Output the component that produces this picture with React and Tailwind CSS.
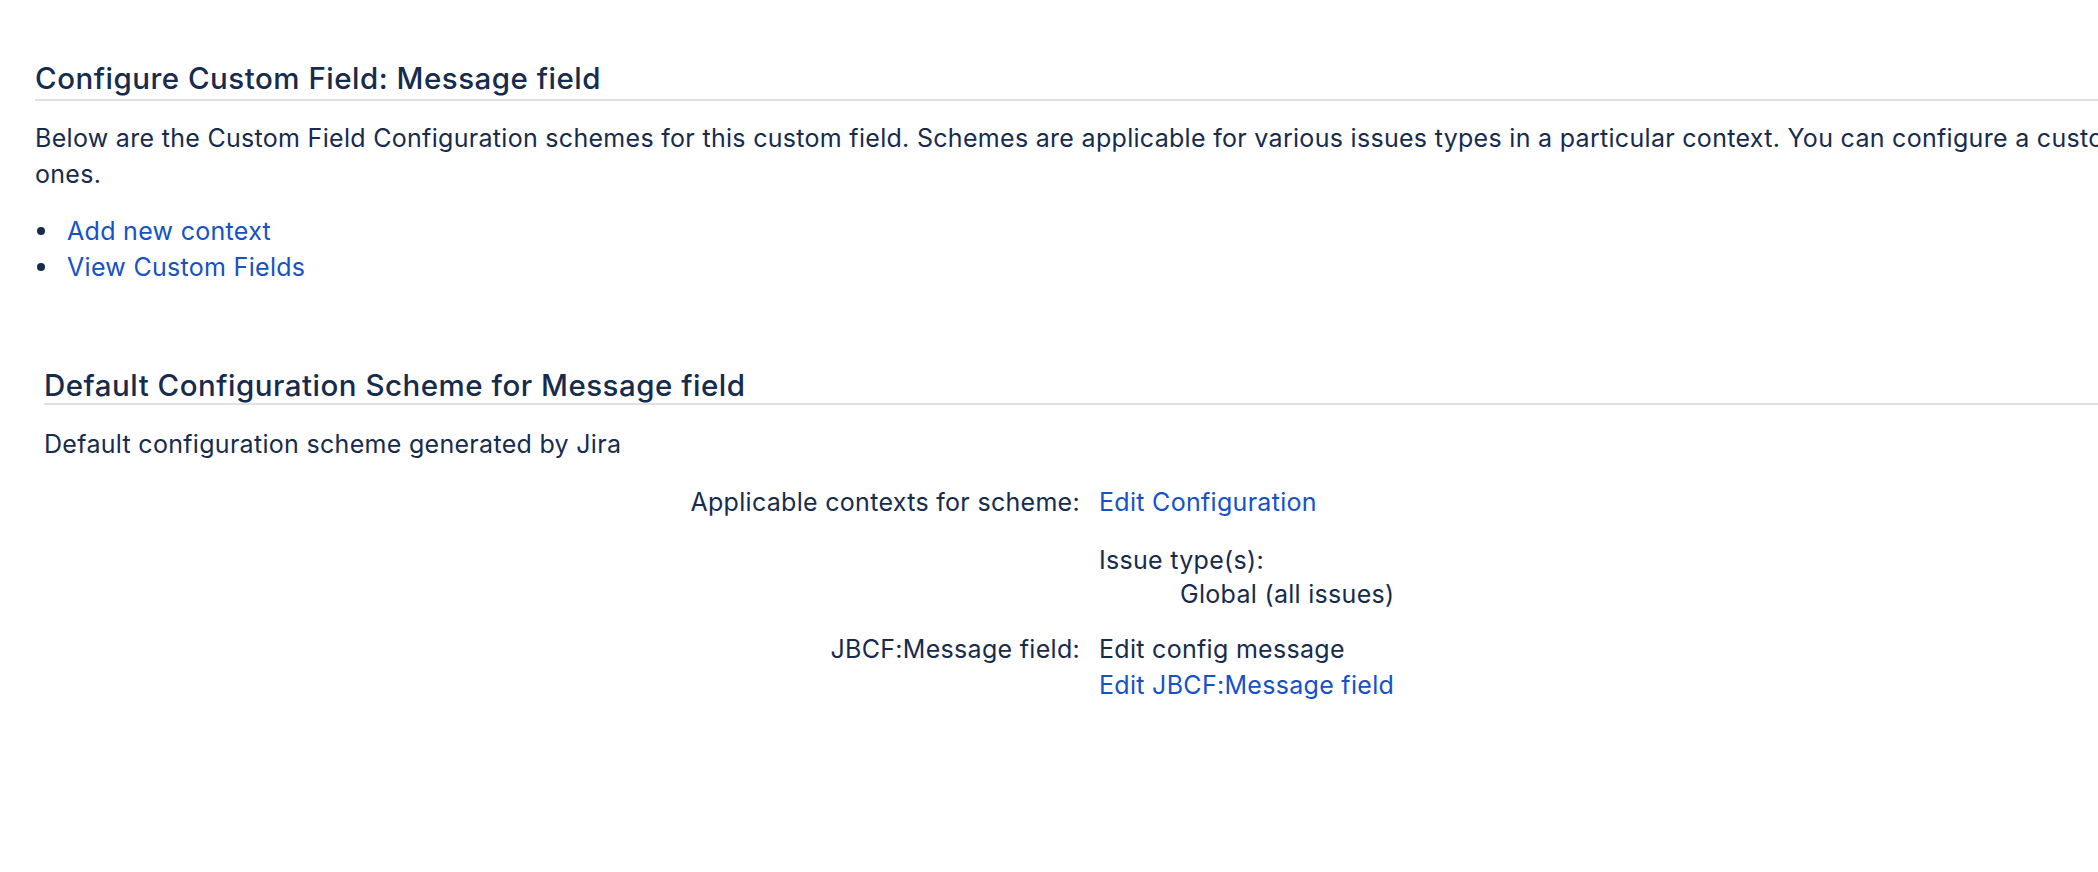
import React from "react";

export default function App() {
  const font = { fontFamily: 'Inter, "Noto Sans", "Liberation Sans", sans-serif' };
  return (
    <div className="w-full min-h-screen overflow-hidden bg-white text-[#172b4d]" style={font}>
      <div className="pl-[35px] pt-[61px]">
        <h2 className="text-[29.5px] leading-[35px] font-medium tracking-[0.5px] pb-[3px] border-b-2 border-[#dfe1e6]">
          Configure Custom Field: Message field
        </h2>
        <div className="text-[25px] leading-[36px] tracking-[0.3px]">
          <p className="mt-[19px] whitespace-nowrap">
            Below are the Custom Field Configuration schemes for this custom field. Schemes are applicable for various issues types in a particular context. You can configure a custom field to have different default values and options for each scheme, by creating new schemes or modifying existing
            <br />
            ones.
          </p>
          <ul className="mt-[21px]">
            <li className="flex items-center">
              <span className="ml-[2px] w-[8px] h-[8px] rounded-full bg-[#172b4d]" />
              <a className="ml-[22px] text-[#1552c6]" href="#">Add new context</a>
            </li>
            <li className="flex items-center">
              <span className="ml-[2px] w-[8px] h-[8px] rounded-full bg-[#172b4d]" />
              <a className="ml-[22px] text-[#1552c6]" href="#">View Custom Fields</a>
            </li>
          </ul>
        </div>
        <div className="mt-[83px] pl-[9px]">
          <h3 className="text-[29.5px] leading-[35px] font-medium tracking-[0.5px] border-b-2 border-[#dfe1e6]">
            Default Configuration Scheme for Message field
          </h3>
          <div className="text-[25px] leading-[36px] tracking-[0.3px]">
            <p className="mt-[21px]">Default configuration scheme generated by Jira</p>
            <div className="mt-[22px] grid grid-cols-[1036px_1fr] gap-x-[19px] gap-y-[19px]">
              <div className="text-right">Applicable contexts for scheme:</div>
              <div>
                <a className="text-[#1552c6]" href="#">Edit Configuration</a>
                <div className="mt-[22px]">Issue type(s):</div>
                <div className="-mt-[2px] pl-[81px]">Global (all issues)</div>
              </div>
              <div className="text-right">JBCF:Message field:</div>
              <div>
                <div>Edit config message</div>
                <a className="text-[#1552c6]" href="#">Edit JBCF:Message field</a>
              </div>
            </div>
          </div>
        </div>
      </div>
    </div>
  );
}
